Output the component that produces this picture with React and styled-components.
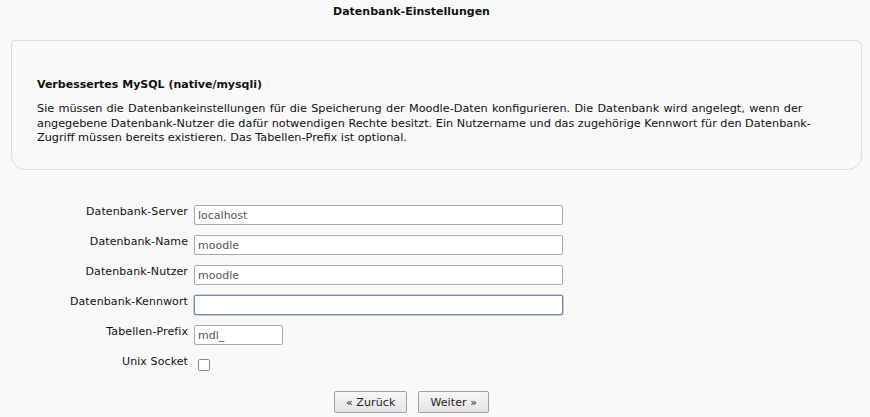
import * as React from "react";
import styled, { createGlobalStyle } from "styled-components";

const GlobalStyle = createGlobalStyle`
  html, body {
    margin: 0;
    padding: 0;
    background: #f9f9f9;
  }
  body {
    font-family: "DejaVu Sans", Verdana, sans-serif;
    font-size: 11px;
    color: #111;
  }
`;

const fields = [
  { label: "Datenbank-Server", value: "localhost", width: 369 },
  { label: "Datenbank-Name", value: "moodle", width: 369 },
  { label: "Datenbank-Nutzer", value: "moodle", width: 369 },
  { label: "Datenbank-Kennwort", value: "", width: 369, type: "password", focused: true },
  { label: "Tabellen-Prefix", value: "mdl_", width: 89 },
];

const infoLines = [
  "Sie müssen die Datenbankeinstellungen für die Speicherung der Moodle-Daten konfigurieren. Die Datenbank wird angelegt, wenn der",
  "angegebene Datenbank-Nutzer die dafür notwendigen Rechte besitzt. Ein Nutzername und das zugehörige Kennwort für den Datenbank-",
  "Zugriff müssen bereits existieren. Das Tabellen-Prefix ist optional.",
];

function App() {
  return (
    <Page>
      <GlobalStyle />
      <Title>Datenbank-Einstellungen</Title>
      <InfoBox>
        <InfoHeading>Verbessertes MySQL (native/mysqli)</InfoHeading>
        <InfoText>
          {infoLines.map((line, i) => (
            <InfoLine key={i} $spacing={i === 0 ? 0.7 : 0}>{line}</InfoLine>
          ))}
        </InfoText>
      </InfoBox>
      <Form>
        {fields.map((f) => (
          <React.Fragment key={f.label}>
            <Label>{f.label}</Label>
            <Field>
              <TextInput
                type={f.type || "text"}
                defaultValue={f.value}
                $width={f.width}
                $focused={f.focused}
              />
            </Field>
          </React.Fragment>
        ))}
        <Label>Unix Socket</Label>
        <Field>
          <Checkbox type="checkbox" />
        </Field>
      </Form>
      <Buttons>
        <Button type="button">« Zurück</Button>
        <Button type="button">Weiter »</Button>
      </Buttons>
    </Page>
  );
}

const Page = styled.div`
  width: 870px;
  height: 417px;
  overflow: hidden;
`;

const Title = styled.h2`
  margin: 0;
  padding: 5px 47px 0 0;
  height: 35px;
  box-sizing: border-box;
  text-align: center;
  font-size: 11px;
  font-weight: bold;
  line-height: 14px;
  color: #111;
`;

const InfoBox = styled.div`
  margin: 5px 8px 0 11px;
  box-sizing: border-box;
  height: 130px;
  padding: 37px 20px 0 25px;
  background: #f9f9f9;
  border: 1px solid #dcdcdc;
  border-radius: 3px 6px 14px 14px;
`;

const InfoHeading = styled.h3`
  margin: 0 0 10px;
  font-size: 11px;
  font-weight: bold;
  line-height: 14px;
  color: #111;
`;

const InfoText = styled.p`
  margin: 0;
  font-size: 11.25px;
  line-height: 14.5px;
  color: #111;
`;

const InfoLine = styled.span`
  display: block;
  white-space: nowrap;
  word-spacing: ${(p) => p.$spacing}px;
`;

const Form = styled.div`
  display: grid;
  grid-template-columns: 188px 1fr;
  column-gap: 6px;
  row-gap: 10px;
  margin-top: 35px;
`;

const Label = styled.div`
  text-align: right;
  font-size: 11px;
  line-height: 14px;
  letter-spacing: 0.1px;
  color: #111;
`;

const Field = styled.div`
  display: flex;
  align-items: flex-start;
  height: 20px;
`;

const TextInput = styled.input`
  box-sizing: border-box;
  width: ${(p) => p.$width}px;
  height: 20px;
  margin: 0;
  padding: 1px 3px 0;
  border: 1px solid ${(p) => (p.$focused ? "#6f8aa8" : "#a9a9a9")};
  border-radius: 2px;
  background: #fff;
  font-family: "DejaVu Sans", Verdana, sans-serif;
  font-size: 11px;
  color: #555;
  outline: none;
  box-shadow: ${(p) => (p.$focused ? "0 0 0 0.5px #8fa6c1" : "none")};
`;

const Checkbox = styled.input`
  width: 12px;
  height: 12px;
  margin: 4px 0 0 4px;
  appearance: none;
  border: 1px solid #8a8a8a;
  border-radius: 2px;
  background: #fff;
`;

const Buttons = styled.div`
  display: flex;
  justify-content: center;
  gap: 11px;
  padding-right: 47px;
  margin-top: 16px;
`;

const Button = styled.button`
  height: 22px;
  padding: 0 11px;
  border: 1px solid #a0a0a0;
  border-radius: 2px;
  background: linear-gradient(#f7f7f7, #e4e4e4);
  font-family: "DejaVu Sans", Verdana, sans-serif;
  font-size: 11px;
  letter-spacing: 0.1px;
  color: #222;
`;

export default App;
